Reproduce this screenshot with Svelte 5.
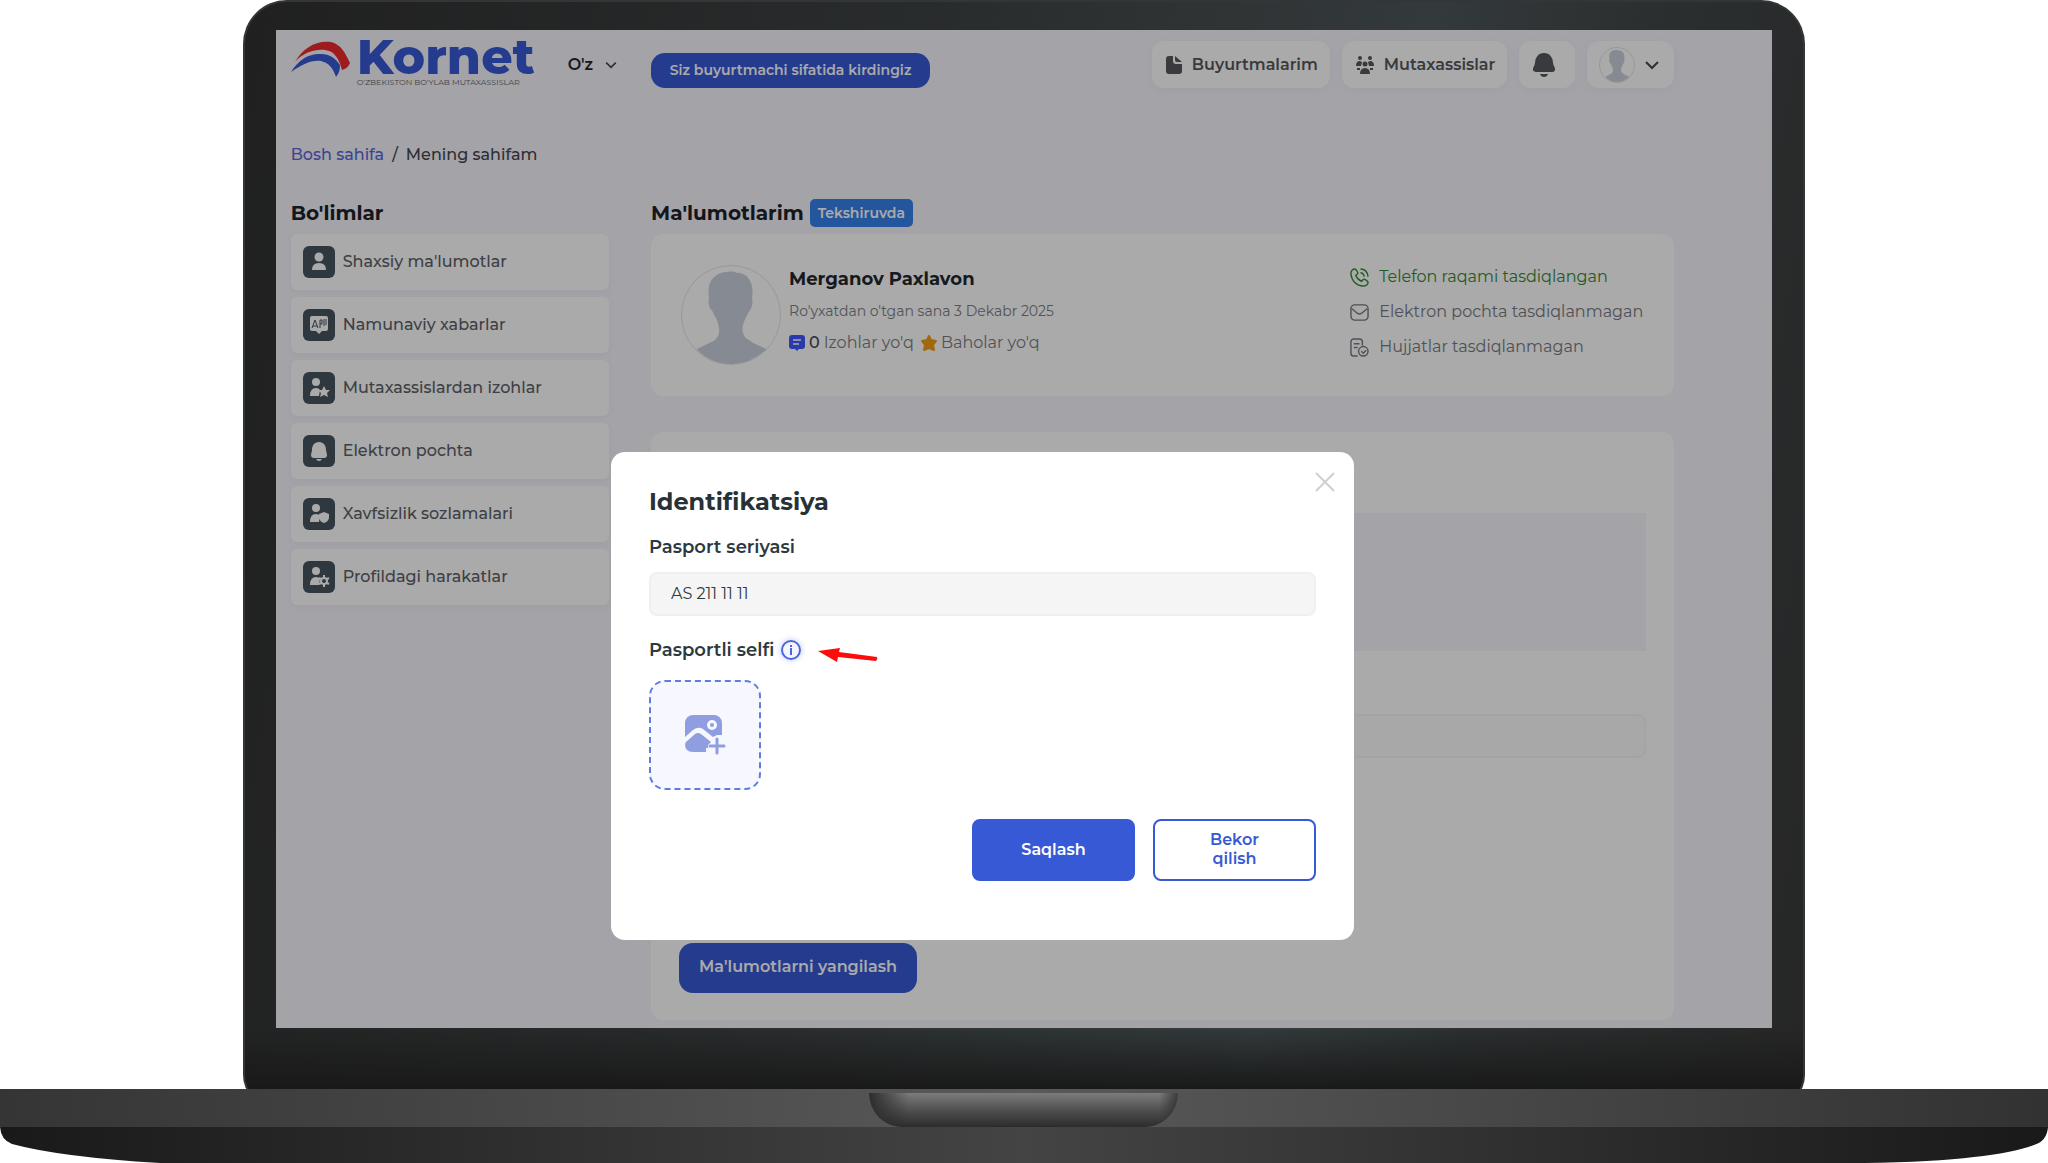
<script>
  let passport = $state("AS 211 11 11");

  const sections = [
    { icon: "user", label: "Shaxsiy ma'lumotlar" },
    { icon: "message", label: "Namunaviy xabarlar" },
    { icon: "userStar", label: "Mutaxassislardan izohlar" },
    { icon: "bell", label: "Elektron pochta" },
    { icon: "userShield", label: "Xavfsizlik sozlamalari" },
    { icon: "userGear", label: "Profildagi harakatlar" },
  ];

  const checks = [
    { icon: "phone", label: "Telefon raqami tasdiqlangan", done: true },
    { icon: "mail", label: "Elektron pochta tasdiqlanmagan", done: false },
    { icon: "doc", label: "Hujjatlar tasdiqlanmagan", done: false },
  ];
</script>

{#snippet silhouette()}
  <svg class="silhouette" viewBox="0 0 100 100" aria-hidden="true">
    <path d="M27 27C27 13 35 6 47 6c4-1 7 0 9 1 10 0 16 8 16 20 0 4-1 5 0 9 0 5-2 9-4 11-2 5-5 9-6 14-1 7 1 12 7 15 5 4 12 6 18 9a49 49 0 0 1-72 0c7-4 13-6 18-9 5-4 6-9 4-16-1-6-4-9-6-14-3-2-4-6-4-11 1-4 0-5 0-8z" />
  </svg>
{/snippet}

{#snippet chevron()}
  <svg class="chevron" viewBox="0 0 14 10" aria-hidden="true">
    <path d="M1 2l6 6 6-6" />
  </svg>
{/snippet}

<div class="laptop">
  <div class="lid">
    <div class="screen">
      <header>
        <a class="logo" href="/">
          <svg class="swoosh" viewBox="0 0 60 36" aria-hidden="true">
            <path d="M4 21C12 7 25-1 40 1c11 3 14 11 19 21-2 4-4 6-8 7C48 17 43 10 34 9 23 8 12 12 4 21z" fill="#ee2a2c" />
            <path d="M0 31C8 18 19 12 30 13c9 0 14 4 19 11 0 5-1 8-4 12-3-9-7-14-15-16-11-1-19 4-30 11z" fill="#3859d6" />
          </svg>
          <span class="brand">
            <strong>Kornet</strong>
            <small>O'ZBEKISTON BO'YLAB MUTAXASSISLAR</small>
          </span>
        </a>
        <button class="lang">O'z {@render chevron()}</button>
        <span class="role">Siz buyurtmachi sifatida kirdingiz</span>
        <nav>
          <a class="pill" href="/orders">
            <svg width="16" height="18" viewBox="0 0 16 18" aria-hidden="true">
              <path d="M3 0h4v5a3 3 0 0 0 3 3h6v7a3 3 0 0 1-3 3H3a3 3 0 0 1-3-3V3a3 3 0 0 1 3-3zM9 0l7 6h-5a2 2 0 0 1-2-2z" />
            </svg>
            Buyurtmalarim
          </a>
          <a class="pill" href="/specialists">
            <svg width="18" height="18" viewBox="0 0 18 18" aria-hidden="true">
              <circle cx="4" cy="2" r="2" /><circle cx="14" cy="2" r="2" /><circle cx="9" cy="8" r="2.5" />
              <path d="M0 10q0-5 4-5l2 1-1 4zM18 10q0-5-4-5l-2 1 1 4zM4 18q0-6 5-6t5 6z" />
              <path d="M1 12h3v2H1zM14 12h3v2h-3z" />
            </svg>
            Mutaxassislar
          </a>
          <button class="pill bell" aria-label="Bildirishnomalar">
            <svg width="22" height="24" viewBox="0 0 22 24" aria-hidden="true">
              <path d="M11 0c6 0 9 5 9 10 0 2 2 4 2 6 0 3-2 3-4 3H4c-2 0-4 0-4-3 0-2 2-4 2-6 0-5 3-10 9-10zM7 21h8q-1 3-4 3t-4-3z" />
            </svg>
          </button>
          <button class="pill account" aria-label="Profil">
            <span class="avatar small">{@render silhouette()}</span>
            {@render chevron()}
          </button>
        </nav>
      </header>

      <div class="crumbs">
        <a href="/">Bosh sahifa</a>
        <span>/</span>
        <span>Mening sahifam</span>
      </div>

      <div class="columns">
        <aside>
          <h2>Bo'limlar</h2>
          <ul class="menu">
            {#each sections as item}
              <li>
                <a href="#{item.icon}">
                  <span class="tile">
                    <svg width="20" height="20" viewBox="0 0 20 20" aria-hidden="true">
                      {#if item.icon === "user"}
                        <circle cx="10" cy="5" r="4.5" />
                        <path d="M3 18q0-7 7-7t7 7z" />
                      {:else if item.icon === "message"}
                        <path d="M3 1h14a2 2 0 0 1 2 2v11a2 2 0 0 1-2 2h-4l-3 3-3-3H3a2 2 0 0 1-2-2V3a2 2 0 0 1 2-2z" />
                        <path class="cut" d="M3 13l3-8 3 8M4 11h4M11 5v8M11 5h2v4h-2M15 4v7M17 4v6" />
                      {:else if item.icon === "bell"}
                        <path d="M10 1c5 0 7 4 7 8 0 2 1 3 1 5s-1 3-3 3H5c-2 0-3-1-3-3s1-3 1-5c0-4 2-8 7-8zM7 18h6q-1 2-3 2t-3-2z" />
                      {:else}
                        <circle cx="7" cy="4" r="4" />
                        <path d="M1 18q0-8 6-8 3 0 4 2l-1 6z" />
                        {#if item.icon === "userStar"}
                          <path d="M15 8l2 4 4 0-3 3 1 4-4-2-4 2 1-4-3-3 4 0z" />
                        {:else if item.icon === "userShield"}
                          <path d="M15 8l5 2v4q-1 4-5 5-4-1-5-5v-4z" />
                        {:else}
                          <circle class="gear" cx="15" cy="14" r="3" />
                          <path class="teeth" d="M15 8v3M15 17v3M10 11l2 1M18 16l2 1M10 17l2-1M18 12l2-1" />
                        {/if}
                      {/if}
                    </svg>
                  </span>
                  {item.label}
                </a>
              </li>
            {/each}
          </ul>
        </aside>

        <main>
          <h2>Ma'lumotlarim <span class="status">Tekshiruvda</span></h2>

          <section class="card profile">
            <span class="avatar">{@render silhouette()}</span>
            <div class="who">
              <h3>Merganov Paxlavon</h3>
              <p class="since">Ro'yxatdan o'tgan sana 3 Dekabr 2025</p>
              <p class="rating">
                <svg width="16" height="16" viewBox="0 0 16 16" aria-hidden="true">
                  <path d="M3 0h10a3 3 0 0 1 3 3v8a3 3 0 0 1-3 3h-3l-2 2-2-2H3a3 3 0 0 1-3-3V3a3 3 0 0 1 3-3z" fill="#4058ff" />
                  <path d="M4 5h8M4 9h6" stroke="#fff" stroke-width="1.5" />
                </svg>
                <b>0</b>
                <span>Izohlar yo'q</span>
                <svg width="16" height="16" viewBox="0 0 16 16" aria-hidden="true">
                  <path d="M8 1l2 4 5 1-3 4 1 5-5-2-5 2 1-5-3-4 5-1z" fill="#f39c12" stroke="#f39c12" stroke-width="2" stroke-linejoin="round" />
                </svg>
                <span>Baholar yo'q</span>
              </p>
            </div>
            <ul class="checks">
              {#each checks as check}
                <li class:done={check.done}>
                  <svg width="19" height="19" viewBox="0 0 20 20" aria-hidden="true">
                    {#if check.icon === "phone"}
                      <path d="M5 1C3 1 1 3 1 5c0 8 6 14 13 14 3 0 5-2 5-4 0-1-4-4-5-3l-2 2c-2-1-5-4-6-6l2-2c1-1-2-5-3-5z" />
                      <path d="M11 5q3 0 4 4M11 1q7 0 8 8" />
                    {:else if check.icon === "mail"}
                      <rect x="1" y="2" width="18" height="16" rx="4" />
                      <path d="M2 6l6 5q2 1 4 0l6-5" />
                    {:else}
                      <path d="M8 19H4a3 3 0 0 1-3-3V4a3 3 0 0 1 3-3h6a3 3 0 0 1 3 3v4M4 6h6M4 10h4" />
                      <circle cx="14" cy="14" r="5" />
                      <path d="M12 14l2 2 3-3" />
                    {/if}
                  </svg>
                  {check.label}
                </li>
              {/each}
            </ul>
          </section>

          <section class="card details">
            <div class="notice"></div>
            <input class="field" aria-label="Ma'lumot" />
            <button class="update">Ma'lumotlarni yangilash</button>
          </section>
        </main>
      </div>

      <div class="overlay">
        <div class="modal" role="dialog" aria-modal="true" aria-labelledby="modal-title">
          <button class="close" aria-label="Yopish">
            <svg width="20" height="20" viewBox="0 0 20 20" aria-hidden="true">
              <path d="M1 1l18 18M19 1L1 19" />
            </svg>
          </button>
          <h1 id="modal-title">Identifikatsiya</h1>
          <label for="passport">Pasport seriyasi</label>
          <input id="passport" class="field" bind:value={passport} />
          <div class="selfie">
            <label for="selfie">Pasportli selfi</label>
            <svg class="info" width="20" height="20" viewBox="0 0 20 20" aria-hidden="true">
              <circle cx="10" cy="10" r="9" />
              <path d="M9 9h1v6M10 5v2" />
            </svg>
            <svg class="arrow" width="60" height="16" viewBox="0 0 60 16" aria-hidden="true">
              <path d="M0 3L22 0l-1 4 38 5q1 2-1 4L20 9l-1 5z" />
            </svg>
          </div>
          <button id="selfie" class="upload">
            <svg width="40" height="40" viewBox="0 0 40 40" aria-hidden="true">
              <path fill-rule="evenodd" d="M8 0h21a8 8 0 0 1 8 8v12h-5l-4 2-10-8q-5-3-10 1l-8 7V8a8 8 0 0 1 8-8zM27 5a5 5 0 1 0 0 10 5 5 0 0 0 0-10z" />
              <circle cx="27" cy="10" r="2" />
              <path d="M1 27l9-8q3-2 6 0l10 8-3 3v3h-2v4H8q-8 0-8-8z" />
              <path class="plus" d="M32 24v14M25 31h14" />
            </svg>
          </button>
          <div class="actions">
            <button class="save">Saqlash</button>
            <button class="cancel">Bekor<br />qilish</button>
          </div>
        </div>
      </div>
    </div>
  </div>

  <svg class="base" viewBox="0 0 2048 74" aria-hidden="true">
    <defs>
      <linearGradient id="deck">
        <stop offset="0" stop-color="#353535" />
        <stop offset="0.5" stop-color="#595959" />
        <stop offset="1" stop-color="#323232" />
      </linearGradient>
      <linearGradient id="under">
        <stop offset="0" stop-color="#191919" />
        <stop offset="0.5" stop-color="#444444" />
        <stop offset="1" stop-color="#191919" />
      </linearGradient>
      <linearGradient id="notch" x2="0" y2="1">
        <stop offset="0" stop-color="#7c7c7c" />
        <stop offset="0.5" stop-color="#505050" />
        <stop offset="1" stop-color="#2c2c2c" />
      </linearGradient>
      <linearGradient id="notchEdge">
        <stop offset="0" stop-color="#2c2c2c" />
        <stop offset="0.13" stop-color="#2c2c2c" stop-opacity="0" />
        <stop offset="0.94" stop-color="#2c2c2c" stop-opacity="0" />
        <stop offset="1" stop-color="#2c2c2c" stop-opacity="0.8" />
      </linearGradient>
    </defs>
    <path d="M0 38h2048q-1 14-14 18-22 8-60 12-40 5-110 6H160Q60 68 12 55 1 51 0 38z" fill="url(#under)" />
    <path d="M0 0h2048v38H0z" fill="url(#deck)" />
    <path d="M869 4h309c0 18-14 34-34 34H903c-20 0-34-16-34-34z" fill="url(#notch)" />
    <path d="M869 4h309c0 18-14 34-34 34H903c-20 0-34-16-34-34z" fill="url(#notchEdge)" />
  </svg>
</div>

<style>
  :global(body) {
    background: #fff;
  }

  * {
    box-sizing: border-box;
  }

  .laptop {
    font-family: Montserrat, Inter, sans-serif;
    font-size: 16px;
    line-height: 24px;
    color: #5c6066;
  }

  button,
  input {
    font: inherit;
    color: inherit;
  }

  button {
    border: 0;
    background: none;
    padding: 0;
    cursor: pointer;
  }

  a {
    color: inherit;
    text-decoration: none;
  }

  h1,
  h2,
  h3,
  p,
  ul {
    margin: 0;
    padding: 0;
    list-style: none;
  }

  svg {
    display: block;
    flex: none;
    overflow: visible;
  }

  /* the lower edge of the lid is tucked behind the base */
  .lid {
    width: 76.3%;
    margin: 0 auto -18px;
    padding: 30px 33px 79px;
    border-radius: 44px 44px 32px 32px;
    background:
      linear-gradient(#1b1b1b00 calc(100% - 79px), #191919 calc(100% - 18px)),
      linear-gradient(100deg, #202020, #292c2d 40%, #333a3b 68%, #2b2f30 80%, #262626);
    box-shadow: inset 0 0 0 2px #343536;
  }

  .screen {
    position: relative;
    padding: 11px 98px 8px 15px;
    background: #f5f5fd;
  }

  /* header */
  header {
    display: flex;
    align-items: center;
    height: 47px;
  }

  .logo {
    display: flex;
    align-self: flex-start;
    gap: 6px;
    width: 277px;
  }

  .swoosh {
    width: 60px;
    height: 36px;
  }

  .brand {
    display: flex;
    flex-direction: column;
    white-space: nowrap;
  }

  .brand strong {
    font-size: 49px;
    font-weight: 800;
    line-height: 32px;
    color: #3859d6;
  }

  .brand small {
    margin-top: 4px;
    font-size: 8px;
    line-height: 10px;
    color: #62656c;
  }

  .lang {
    display: flex;
    align-items: center;
    gap: 12px;
    width: 83px;
    font-weight: 600;
    color: #24262a;
  }

  .chevron {
    width: 12px;
    height: 8px;
    fill: none;
    stroke: #44464a;
    stroke-width: 2;
  }

  .role {
    padding: 5px 19px 6px;
    border-radius: 14px;
    background: #3859d6;
    color: #fff;
    font-size: 14px;
    font-weight: 600;
    white-space: nowrap;
    align-self: flex-end;
  }

  nav {
    display: flex;
    gap: 12px;
    margin-left: auto;
  }

  .pill {
    display: flex;
    align-items: center;
    gap: 10px;
    height: 47px;
    padding: 0 12px 0 14px;
    border-radius: 12px;
    background: #fff;
    box-shadow: 0 2px 8px #ededf5;
    font-weight: 600;
    color: #56585c;
    fill: #56585c;
    white-space: nowrap;
  }

  .bell {
    padding: 0 20px 0 14px;
  }

  .account {
    padding: 0 15px 0 12px;
  }

  .account .chevron {
    width: 14px;
    height: 10px;
  }

  .avatar {
    width: 100px;
    height: 100px;
    flex: none;
    border: 1px solid #e3e4e8;
    border-radius: 50%;
    overflow: hidden;
  }

  .avatar.small {
    width: 36px;
    height: 36px;
  }

  .silhouette {
    width: 100%;
    height: 100%;
    fill: #cad0dd;
  }

  .crumbs {
    display: flex;
    gap: 8px;
    margin: 55px 0 32px;
    font-weight: 500;
    color: #44474d;
  }

  .crumbs a {
    color: #5c66d8;
  }

  .columns {
    display: grid;
    grid-template-columns: 318fr 1022fr;
    gap: 42px;
  }

  h2 {
    display: flex;
    align-items: center;
    gap: 6px;
    height: 28px;
    margin-bottom: 7px;
    font-size: 20px;
    font-weight: 700;
    color: #1d2127;
  }

  .menu {
    display: grid;
    gap: 7px;
  }

  .menu a {
    display: flex;
    align-items: center;
    gap: 8px;
    height: 56px;
    padding: 0 12px;
    border-radius: 6px;
    background: #fff;
    box-shadow: 0 2px 6px #ececf3;
    font-weight: 500;
  }

  .tile {
    display: grid;
    place-items: center;
    width: 32px;
    height: 32px;
    border-radius: 6px;
    background: #47535f;
    fill: #fff;
  }

  .cut {
    fill: none;
    stroke: #47535f;
  }

  .gear,
  .teeth {
    fill: none;
    stroke: #fff;
    stroke-width: 2;
  }

  .status {
    padding: 2px 8px;
    border-radius: 5px;
    background: #3681ec;
    font-size: 14px;
    font-weight: 600;
    color: #fff;
  }

  .card {
    border-radius: 12px;
    background: #fff;
    box-shadow: 0 0 8px #f8f8fc;
  }

  .profile {
    display: flex;
    gap: 8px;
    margin-bottom: 36px;
    padding: 31px 31px 31px 30px;
  }

  h3 {
    margin-top: 2px;
    font-size: 18px;
    font-weight: 700;
    color: #22272e;
  }

  .since {
    margin: 8px 0;
    font-size: 14px;
    color: #7c7e84;
  }

  .rating {
    display: flex;
    align-items: center;
    gap: 4px;
    color: #7c7e84;
  }

  .rating b {
    font-weight: 500;
    color: #44474d;
  }

  .rating span + svg {
    margin-left: 3px;
  }

  .checks {
    display: grid;
    align-content: start;
    gap: 11px;
    margin-left: auto;
  }

  .checks li {
    display: flex;
    align-items: center;
    gap: 10px;
    color: #777a82;
  }

  .checks svg {
    fill: none;
    stroke: currentColor;
    stroke-width: 1.5;
  }

  .checks .done {
    color: #348a32;
  }

  .details {
    padding: 81px 28px 27px;
  }

  .notice {
    height: 138px;
    margin-bottom: 63px;
    background: #f5f5fd;
  }

  .field {
    display: block;
    width: 100%;
    height: 44px;
    padding: 0 20px 2px;
    border: 2px solid #f6f6f6;
    border-radius: 8px;
    background: #fcfcfc;
  }

  .update {
    display: block;
    height: 50px;
    margin-top: 185px;
    padding: 0 20px 2px;
    border-radius: 14px;
    background: #3859d6;
    font-weight: 600;
    color: #fff;
  }

  /* dimmed layer with the dialog */
  .overlay {
    position: absolute;
    inset: 0;
    display: flex;
    align-items: flex-start;
    justify-content: center;
    padding: 422px 98px 0 15px;
    background: rgba(0, 0, 0, 0.335);
  }

  .modal {
    position: relative;
    width: 100%;
    max-width: 743px;
    padding: 36px 38px 59px;
    border-radius: 14px;
    background: #fff;
    color: #2c3a40;
  }

  .close {
    position: absolute;
    top: 20px;
    right: 19px;
    fill: none;
    stroke: #cfcfcf;
    stroke-width: 2;
  }

  h1 {
    margin-bottom: 19px;
    font-size: 24px;
    font-weight: 700;
    line-height: 28px;
    color: #263238;
  }

  .modal label {
    display: block;
    font-size: 18px;
    font-weight: 600;
  }

  .modal .field {
    margin: 13px 0 22px;
    border-color: #efefef;
    background: #f5f5f5;
  }

  .selfie {
    display: flex;
    align-items: center;
    gap: 7px;
    height: 24px;
  }

  .info {
    border-radius: 50%;
    box-shadow: 0 0 6px #b9c4f5;
    fill: #f4f6ff;
    stroke: #4c66d9;
    stroke-width: 2;
  }

  .arrow {
    margin: 12px 0 0 10px;
    fill: #fb0d0d;
  }

  .upload {
    display: grid;
    place-items: center;
    width: 112px;
    height: 110px;
    margin-top: 18px;
    border: 2px dashed #5f7de0;
    border-radius: 16px;
    background: #f6f7ff;
    fill: #8e9ee0;
  }

  .plus {
    stroke: #8e9ee0;
    stroke-width: 3;
    stroke-linecap: round;
  }

  .actions {
    display: flex;
    justify-content: flex-end;
    gap: 18px;
    margin-top: 29px;
  }

  .actions button {
    width: 163px;
    height: 62px;
    padding-bottom: 2px;
    border: 2px solid #3859d6;
    border-radius: 8px;
    font-weight: 600;
    line-height: 19px;
  }

  .save {
    background: #3859d6;
    color: #fff;
  }

  .cancel {
    color: #3859d6;
  }

  .base {
    position: relative;
    width: 100%;
    height: auto;
  }
</style>
